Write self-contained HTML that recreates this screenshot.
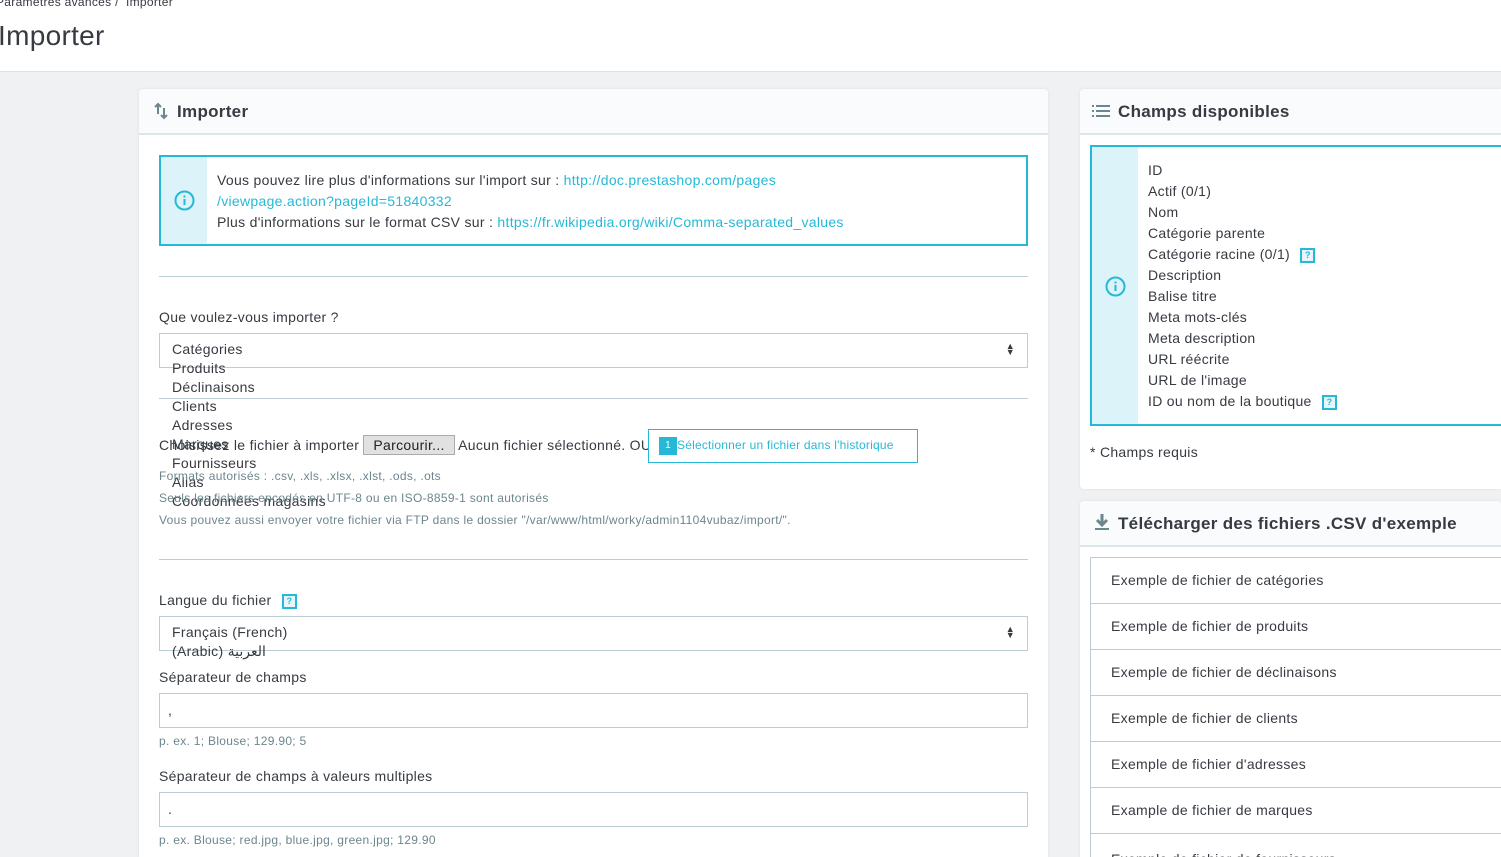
<!DOCTYPE html>
<html><head><meta charset="utf-8"><style>
*{box-sizing:border-box;margin:0;padding:0}
html{width:1501px;height:857px;overflow:hidden}
body{width:1501px;height:857px;overflow:hidden;background:#eff1f2;font-family:"Liberation Sans",sans-serif;color:#363a41;font-size:14px;letter-spacing:.3px;position:relative}
.a{position:absolute;white-space:nowrap}
.hdr{position:absolute;left:0;top:0;width:1501px;height:72px;background:#fff;border-bottom:1px solid #dde1e4}
.card{position:absolute;background:#fff;border-radius:4px 4px 0 0;box-shadow:0 0 3px rgba(0,0,0,.08);overflow:hidden}
.ch{position:absolute;left:0;top:0;right:0;height:46px;background:#fafbfc;border-bottom:2px solid #dbe6e9;border-radius:4px 4px 0 0}
.ch span{position:absolute;left:38px;top:13px;font-size:17px;font-weight:bold;color:#363a41}
.lnk{color:#25b9d7}
.sel{position:absolute;border:1px solid #bbcdd2;background:#fff}
.help{color:#6c868e;font-size:12px}
.q{display:inline-block;width:15px;height:15px;border:2px solid #25b9d7;color:#25b9d7;font-size:9px;font-weight:bold;text-align:center;line-height:11px;vertical-align:middle;margin-left:6px;background:#e6f6fa;letter-spacing:0}
.li{position:absolute;left:10px;right:-10px;height:47px;border:1px solid #bbcdd2;border-top:none;padding:14px 20px;font-size:14px}
</style></head><body>
<div class="hdr">
<div class="a" style="left:-4px;top:-5px;font-size:12px;color:#363a41">Paramètres avancés /&nbsp; Importer</div>
<div class="a" style="left:-2px;top:20px;font-size:28px;color:#363a41">Importer</div>
</div>

<div class="card" style="left:139px;top:89px;width:909px;height:768px">
<div class="ch"><svg class="a" style="left:14px;top:13px" width="16" height="18" viewBox="0 0 16 18"><path d="M5 2v10M2 5l3-3 3 3M11 6v10M8 13l3 3 3-3" stroke="#6c868e" stroke-width="2" fill="none"/></svg><span>Importer</span></div>
<div class="a" style="left:20px;top:66px;width:869px;height:91px;border:2px solid #25b9d7">
<div class="a" style="left:0;top:0;width:46px;height:87px;background:#dcf4f9"></div>
<svg class="a" style="left:13px;top:33px" width="21" height="21" viewBox="0 0 21 21"><circle cx="10.5" cy="10.5" r="9" stroke="#25b9d7" stroke-width="2" fill="none"/><rect x="9.5" y="9" width="2" height="6" fill="#25b9d7"/><rect x="9.5" y="5.5" width="2" height="2" fill="#25b9d7"/></svg>
<div class="a" style="left:56px;top:13px;line-height:21px">Vous pouvez lire plus d'informations sur l'import sur : <span class="lnk">http://doc.prestashop.com/pages</span><br><span class="lnk">/viewpage.action?pageId=51840332</span><br>Plus d'informations sur le format CSV sur : <span class="lnk">https://fr.wikipedia.org/wiki/Comma-separated_values</span></div>
</div>
<div class="a" style="left:20px;top:187px;width:869px;border-top:1px solid #bbcdd2"></div>
<div class="a" style="left:20px;top:220px">Que voulez-vous importer ?</div>
<div class="sel" style="left:20px;top:244px;width:869px;height:35px"><div class="a" style="right:12px;top:9px;font-size:9px;line-height:6px">▲<br>▼</div></div>
<div class="a" style="left:33px;top:251px;line-height:19px">Catégories<br>Produits<br>Déclinaisons<br>Clients<br>Adresses<br>Marques<br>Fournisseurs<br>Alias<br>Coordonnées magasins</div>
<div class="a" style="left:20px;top:309px;width:869px;border-top:1px solid #bbcdd2"></div>
<div class="a" style="left:20px;top:346px">Choisissez le fichier à importer <span style="display:inline-block;border:1px solid #aaa;background:#e1e1e1;padding:1px 9px;color:#222">Parcourir...</span> Aucun fichier sélectionné. OU</div>
<div class="a" style="left:509px;top:340px;width:270px;height:34px;border:1px solid #25b9d7;background:#fff"><span class="a" style="left:10px;top:7px;width:18px;height:18px;background:#25b9d7;color:#fff;font-size:10px;text-align:center;line-height:18px">1</span><span class="a" style="left:28px;top:8px;font-size:12px;color:#25b9d7;letter-spacing:.2px">Sélectionner un fichier dans l'historique</span></div>
<div class="a help" style="left:20px;top:380px">Formats autorisés : .csv, .xls, .xlsx, .xlst, .ods, .ots</div>
<div class="a help" style="left:20px;top:402px">Seuls les fichiers encodés en UTF-8 ou en ISO-8859-1 sont autorisés</div>
<div class="a help" style="left:20px;top:424px">Vous pouvez aussi envoyer votre fichier via FTP dans le dossier "/var/www/html/worky/admin1104vubaz/import/".</div>
<div class="a" style="left:20px;top:470px;width:869px;border-top:1px solid #bbcdd2"></div>
<div class="a" style="left:20px;top:503px">Langue du fichier <span class="q">?</span></div>
<div class="sel" style="left:20px;top:527px;width:869px;height:35px"><div class="a" style="right:12px;top:9px;font-size:9px;line-height:6px">▲<br>▼</div></div>
<div class="a" style="left:33px;top:534px;line-height:19px">Français (French)<br>(Arabic) العربية</div>
<div class="a" style="left:20px;top:580px">Séparateur de champs</div>
<div class="sel" style="left:20px;top:604px;width:869px;height:35px"><span class="a" style="left:8px;top:8px">,</span></div>
<div class="a help" style="left:20px;top:645px">p. ex. 1; Blouse; 129.90; 5</div>
<div class="a" style="left:20px;top:679px">Séparateur de champs à valeurs multiples</div>
<div class="sel" style="left:20px;top:703px;width:869px;height:35px"><span class="a" style="left:8px;top:8px">.</span></div>
<div class="a help" style="left:20px;top:744px">p. ex. Blouse; red.jpg, blue.jpg, green.jpg; 129.90</div>
</div>

<div class="card" style="left:1080px;top:89px;width:421px;height:400px;border-radius:4px 0 0 4px">
<div class="ch"><svg class="a" style="left:12px;top:15px" width="19" height="14" viewBox="0 0 19 14"><g fill="#6c868e"><rect x="0" y="1" width="2" height="2"/><rect x="0" y="6" width="2" height="2"/><rect x="0" y="11" width="2" height="2"/><rect x="4" y="1" width="14" height="2"/><rect x="4" y="6" width="14" height="2"/><rect x="4" y="11" width="14" height="2"/></g></svg><span>Champs disponibles</span></div>
<div class="a" style="left:10px;top:56px;width:440px;height:281px;border:2px solid #25b9d7">
<div class="a" style="left:0;top:0;width:46px;height:277px;background:#dcf4f9"></div>
<svg class="a" style="left:13px;top:129px" width="21" height="21" viewBox="0 0 21 21"><circle cx="10.5" cy="10.5" r="9" stroke="#25b9d7" stroke-width="2" fill="none"/><rect x="9.5" y="9" width="2" height="6" fill="#25b9d7"/><rect x="9.5" y="5.5" width="2" height="2" fill="#25b9d7"/></svg>
<div class="a" style="left:56px;top:13px;line-height:21px">ID<br>Actif (0/1)<br>Nom<br>Catégorie parente<br>Catégorie racine (0/1) <span class="q">?</span><br>Description<br>Balise titre<br>Meta mots-clés<br>Meta description<br>URL réécrite<br>URL de l'image<br>ID ou nom de la boutique <span class="q">?</span></div>
</div>
<div class="a" style="left:10px;top:355px">* Champs requis</div>
</div>

<div class="card" style="left:1080px;top:501px;width:421px;height:356px">
<div class="ch"><svg class="a" style="left:14px;top:13px" width="16" height="17" viewBox="0 0 16 17"><path d="M8 0v10M3 6l5 5 5-5" stroke="#6c868e" stroke-width="3" fill="none"/><rect x="1" y="14" width="14" height="2" fill="#6c868e"/></svg><span>Télécharger des fichiers .CSV d'exemple</span></div>
<div class="li" style="top:56px;border-top:1px solid #bbcdd2">Exemple de fichier de catégories</div>
<div class="li" style="top:103px;height:46px">Exemple de fichier de produits</div>
<div class="li" style="top:149px;height:46px">Exemple de fichier de déclinaisons</div>
<div class="li" style="top:195px;height:46px">Exemple de fichier de clients</div>
<div class="li" style="top:241px;height:46px">Exemple de fichier d'adresses</div>
<div class="li" style="top:287px;height:46px">Example de fichier de marques</div>
<div class="li" style="top:333px;height:23px;padding-top:17px;overflow:hidden">Exemple de fichier de fournisseurs</div>
</div>
</body></html>
